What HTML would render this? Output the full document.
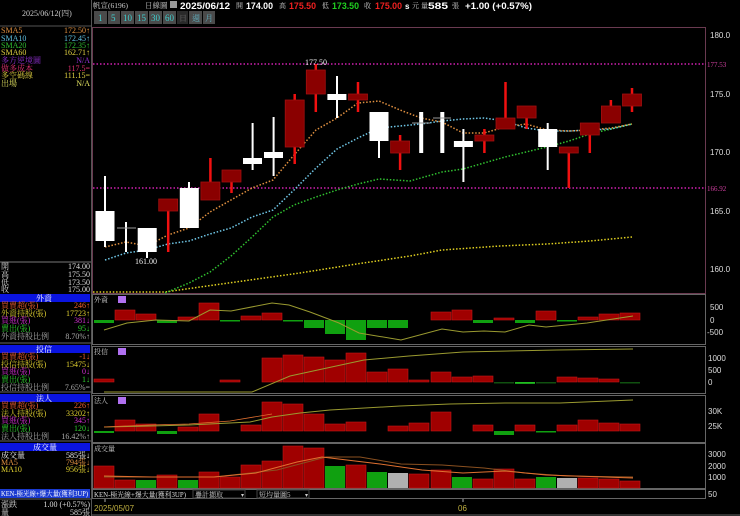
<!DOCTYPE html>
<html><head><meta charset="utf-8"><style>
html,body{margin:0;padding:0;background:#000;width:740px;height:516px;overflow:hidden}
svg{display:block}
text{font-family:"Liberation Serif","Noto Serif CJK TC","Noto Sans CJK TC",serif;font-size:8px}
.b{font-family:"Liberation Sans","Noto Sans CJK TC",sans-serif;font-weight:bold;font-size:9.5px}
.ax{font-family:"Liberation Sans",sans-serif;font-size:8px;fill:#ddd}
</style></head><body>
<svg width="740" height="516" viewBox="0 0 740 516" xmlns="http://www.w3.org/2000/svg">
<rect width="740" height="516" fill="#000"/>
<!-- header -->
<text x="93" y="8" fill="#ccc" style="font-size:7.5px">帆宣(6196)</text>
<text x="145" y="8" fill="#ccc" style="font-size:7.5px">日線圖</text>
<rect x="170" y="1" width="7" height="7" fill="#999"/>
<text class="b" x="180" y="9" fill="#fff" textLength="50" lengthAdjust="spacingAndGlyphs">2025/06/12</text>
<text x="236" y="8" fill="#ccc" style="font-size:7px">開</text><text class="b" x="246" y="9" fill="#fff" textLength="27" lengthAdjust="spacingAndGlyphs">174.00</text>
<text x="279" y="8" fill="#ccc" style="font-size:7px">高</text><text class="b" x="289" y="9" fill="#f02020" textLength="27" lengthAdjust="spacingAndGlyphs">175.50</text>
<text x="322" y="8" fill="#ccc" style="font-size:7px">低</text><text class="b" x="332" y="9" fill="#20d020" textLength="27" lengthAdjust="spacingAndGlyphs">173.50</text>
<text x="364" y="8" fill="#ccc" style="font-size:7px">收</text><text class="b" x="375" y="9" fill="#f02020" textLength="27" lengthAdjust="spacingAndGlyphs">175.00</text>
<text class="b" x="405" y="9" fill="#fff" style="font-size:8px">s</text><text x="412" y="8" fill="#ccc" style="font-size:7px">元</text>
<text x="421" y="8" fill="#ccc" style="font-size:7px">量</text><text class="b" x="428" y="9" fill="#fff" textLength="20" lengthAdjust="spacingAndGlyphs">585</text><text x="452" y="8" fill="#ccc" style="font-size:7px">張</text>
<text class="b" x="465" y="9" fill="#fff" textLength="67" lengthAdjust="spacingAndGlyphs">+1.00 (+0.57%)</text>
<!-- buttons -->
<g fill="#4a4a4a">
<rect x="94" y="11" width="13" height="13"/><rect x="108" y="11" width="12" height="13"/><rect x="121" y="11" width="13" height="13"/><rect x="135" y="11" width="13" height="13"/><rect x="149" y="11" width="13" height="13"/><rect x="163" y="11" width="13" height="13"/><rect x="177" y="11" width="11" height="13" fill="#2a2a2a"/><rect x="189" y="11" width="13" height="13"/><rect x="203" y="11" width="12" height="13"/></g>
<g fill="#40d0d0"><text x="98" y="21" style="font-size:9px">1</text><text x="111" y="21" style="font-size:9px">5</text><text x="123" y="21" style="font-size:9px">10</text><text x="137" y="21" style="font-size:9px">15</text><text x="151" y="21" style="font-size:9px">30</text><text x="165" y="21" style="font-size:9px">60</text></g>
<text x="179" y="21" fill="#666">日</text><text x="192" y="21" fill="#60b0c0">週</text><text x="205" y="21" fill="#60b0c0">月</text>

<!-- left panel -->
<text x="22" y="16" fill="#ccc">2025/06/12(四)</text>
<line x1="0" y1="26" x2="91" y2="26" stroke="#555"/>
<g style="font-size:7.5px">
<text x="1" y="33" fill="#e09040">SMA5</text><text x="90" y="33" fill="#e09040" text-anchor="end">172.50↑</text>
<text x="1" y="41" fill="#60c0e0">SMA10</text><text x="90" y="41" fill="#60c0e0" text-anchor="end">172.45↑</text>
<text x="1" y="48" fill="#30c030">SMA20</text><text x="90" y="48" fill="#30c030" text-anchor="end">172.35↑</text>
<text x="1" y="55" fill="#e0d040">SMA60</text><text x="90" y="55" fill="#e0d040" text-anchor="end">162.71↑</text>
<text x="1" y="63" fill="#9030d0">多方逆境圖</text><text x="90" y="63" fill="#9030d0" text-anchor="end">N/A</text>
<text x="1" y="71" fill="#e03070">做多成本</text><text x="90" y="71" fill="#e03070" text-anchor="end">117.5=</text>
<text x="1" y="78" fill="#e0d040">多空碼線</text><text x="90" y="78" fill="#e0d040" text-anchor="end">111.15=</text>
<text x="1" y="86" fill="#e0e060">出場</text><text x="90" y="86" fill="#e0e060" text-anchor="end">N/A</text>
</g>
<line x1="0" y1="262" x2="91" y2="262" stroke="#777"/>
<g fill="#ddd" style="font-size:8px">
<text x="1" y="269">開</text><text x="90" y="269" text-anchor="end">174.00</text>
<text x="1" y="277">高</text><text x="90" y="277" text-anchor="end">175.50</text>
<text x="1" y="285">低</text><text x="90" y="285" text-anchor="end">173.50</text>
<text x="1" y="292">收</text><text x="90" y="292" text-anchor="end">175.00</text>
</g>
<g style="font-size:7.5px">
<rect x="0" y="294" width="90" height="8" fill="#0a14e0"/><text x="36" y="301" fill="#fff">外資</text>
<text x="1" y="308" fill="#f06030">買賣超(張)</text><text x="90" y="308" fill="#f06030" text-anchor="end">246↑</text>
<text x="1" y="316" fill="#e0d030">外資持股(張)</text><text x="90" y="316" fill="#e0d030" text-anchor="end">17723↑</text>
<text x="1" y="323" fill="#d030d0">買進(張)</text><text x="90" y="323" fill="#d030d0" text-anchor="end">381↓</text>
<text x="1" y="331" fill="#30d030">賣出(張)</text><text x="90" y="331" fill="#30d030" text-anchor="end">95↓</text>
<text x="1" y="339" fill="#aaa">外資持股比例</text><text x="90" y="339" fill="#aaa" text-anchor="end">8.70%↑</text>
<line x1="0" y1="343" x2="91" y2="343" stroke="#666"/>
<rect x="0" y="345" width="90" height="8" fill="#0a14e0"/><text x="36" y="352" fill="#fff">投信</text>
<text x="1" y="359" fill="#f06030">買賣超(張)</text><text x="90" y="359" fill="#f06030" text-anchor="end">-1↓</text>
<text x="1" y="367" fill="#e0d030">投信持股(張)</text><text x="90" y="367" fill="#e0d030" text-anchor="end">15475↓</text>
<text x="1" y="374" fill="#d030d0">買進(張)</text><text x="90" y="374" fill="#d030d0" text-anchor="end">0↓</text>
<text x="1" y="382" fill="#30d030">賣出(張)</text><text x="90" y="382" fill="#30d030" text-anchor="end">1↓</text>
<text x="1" y="390" fill="#aaa">投信持股比例</text><text x="90" y="390" fill="#aaa" text-anchor="end">7.65%=</text>
<line x1="0" y1="392" x2="91" y2="392" stroke="#666"/>
<rect x="0" y="394" width="90" height="8" fill="#0a14e0"/><text x="36" y="401" fill="#fff">法人</text>
<text x="1" y="408" fill="#f06030">買賣超(張)</text><text x="90" y="408" fill="#f06030" text-anchor="end">226↑</text>
<text x="1" y="416" fill="#e0d030">法人持股(張)</text><text x="90" y="416" fill="#e0d030" text-anchor="end">33202↑</text>
<text x="1" y="423" fill="#d030d0">買進(張)</text><text x="90" y="423" fill="#d030d0" text-anchor="end">345↑</text>
<text x="1" y="431" fill="#30d030">賣出(張)</text><text x="90" y="431" fill="#30d030" text-anchor="end">120↓</text>
<text x="1" y="439" fill="#aaa">法人持股比例</text><text x="90" y="439" fill="#aaa" text-anchor="end">16.42%↑</text>
<line x1="0" y1="441" x2="91" y2="441" stroke="#666"/>
<rect x="0" y="443" width="90" height="8" fill="#0a14e0"/><text x="33" y="450" fill="#fff">成交量</text>
<text x="1" y="458" fill="#eee">成交量</text><text x="90" y="458" fill="#eee" text-anchor="end">585張↓</text>
<text x="1" y="465" fill="#e09040">MA5</text><text x="90" y="465" fill="#e09040" text-anchor="end">794張↓</text>
<text x="1" y="472" fill="#e0d030">MA10</text><text x="90" y="472" fill="#e0d030" text-anchor="end">956張↓</text>
<rect x="0" y="489" width="90" height="9" fill="#1a3ad0"/><text x="1" y="496" fill="#fff" style="font-size:7px" textLength="87" lengthAdjust="spacingAndGlyphs">KEN-極光線+爆大量(獲利3UP)</text>
<line x1="0" y1="499" x2="91" y2="499" stroke="#666"/>
<text x="1" y="507" fill="#ddd">漲跌</text><text x="90" y="507" fill="#ddd" text-anchor="end">1.00 (+0.57%)</text>
<text x="1" y="515" fill="#ddd">量</text><text x="90" y="515" fill="#ddd" text-anchor="end">585張</text>
</g>
<line x1="91.5" y1="0" x2="91.5" y2="516" stroke="#555"/>

<!-- main chart frame -->
<rect x="92.5" y="27.5" width="613" height="266" fill="none" stroke="#6a3a50"/>
<g class="ax"><text x="710" y="38" class="ax">180.0</text><text x="710" y="97" class="ax">175.0</text><text x="710" y="155" class="ax">170.0</text><text x="710" y="214" class="ax">165.0</text><text x="710" y="272" class="ax">160.0</text>
<text x="707" y="67" fill="#d040a0" style="font-size:7px">177.53</text><text x="707" y="191" fill="#d040a0" style="font-size:7px">166.92</text></g>
<g stroke="#d020b0" stroke-width="1.5" stroke-dasharray="1.5 2"><line x1="93" y1="64" x2="706" y2="64"/><line x1="93" y1="188" x2="706" y2="188"/></g>

<!-- MA lines -->
<g fill="none" stroke-width="1.5" stroke-dasharray="1.5 1.8">
<polyline stroke="#e0d020" points="93,292 165,292 200,287 250,280 300,273 350,265 410,256 442,250 500,246 547,244 590,241 632,237"/>
<polyline stroke="#30c030" points="165,293 189,283 210,272 231,256 252,237 273,217 294,205 316,197 337,190 358,184 379,179 410,181 442,172 463,169 484,163 505,157 526,152 547,147 569,141 590,134 611,129 632,124"/>
<polyline stroke="#70c8e8" points="105,260 126,253 147,250 168,244 189,241 210,234 231,228 252,217 273,210 294,190 316,168 337,149 358,138 379,128 400,126 421,124 442,121 463,119 484,118 505,121 526,128 547,131 569,131 590,130 611,129 632,124"/>
<polyline stroke="#e09040" points="105,247 126,242 147,246 168,235 189,228 210,212 231,200 252,188 273,180 294,155 316,130 337,118 358,103 379,101 400,110 421,118 442,122 463,133 484,133 505,127 526,124 547,130 569,131 590,130 611,128 632,124"/>
</g>

<!-- candles -->
<g stroke="#fff" stroke-width="2">
<line x1="105" y1="176" x2="105" y2="247"/><line x1="126" y1="222" x2="126" y2="252"/><line x1="147" y1="228" x2="147" y2="258"/>
<line x1="189" y1="182" x2="189" y2="228"/><line x1="252.6" y1="123" x2="252.6" y2="170"/><line x1="273.6" y1="117" x2="273.6" y2="176"/>
<line x1="337" y1="76" x2="337" y2="118"/><line x1="379" y1="112" x2="379" y2="158"/><line x1="463.4" y1="129" x2="463.4" y2="182"/><line x1="547.7" y1="123" x2="547.7" y2="170"/>
</g>
<g fill="#fff">
<rect x="95.5" y="211" width="19" height="30"/><rect x="137.7" y="228" width="19" height="24"/><rect x="179.8" y="188" width="19" height="40"/>
<rect x="243" y="158" width="19" height="6"/><rect x="264" y="152" width="19" height="6"/><rect x="327.4" y="94" width="19" height="6"/>
<rect x="369.5" y="112" width="19" height="29"/><rect x="419.2" y="112" width="4" height="41"/><rect x="440.3" y="112" width="4" height="41"/>
<rect x="453.9" y="141" width="19" height="6"/><rect x="538.2" y="129" width="19" height="18"/>
</g>
<g stroke="#999" stroke-width="1"><line x1="117" y1="228" x2="136" y2="228"/><line x1="412" y1="123" x2="430" y2="123"/><line x1="433" y1="118" x2="451" y2="118"/></g>
<g stroke="#f01010" stroke-width="2.5">
<line x1="168.2" y1="199" x2="168.2" y2="252"/><line x1="210.4" y1="158" x2="210.4" y2="200"/><line x1="231.5" y1="170" x2="231.5" y2="193"/>
<line x1="294.7" y1="94" x2="294.7" y2="164"/><line x1="315.8" y1="64" x2="315.8" y2="112"/><line x1="358" y1="82" x2="358" y2="112"/>
<line x1="400.1" y1="135" x2="400.1" y2="170"/><line x1="484.4" y1="129" x2="484.4" y2="153"/><line x1="505.5" y1="82" x2="505.5" y2="129"/>
<line x1="526.6" y1="106" x2="526.6" y2="129"/><line x1="568.8" y1="147" x2="568.8" y2="188"/><line x1="589.8" y1="123" x2="589.8" y2="153"/>
<line x1="610.9" y1="100" x2="610.9" y2="123"/><line x1="632" y1="88" x2="632" y2="112"/>
</g>
<g fill="#8a0000" stroke="#a01010" stroke-width="0.8">
<rect x="158.7" y="199" width="19" height="12"/><rect x="200.9" y="182" width="19" height="18"/><rect x="222" y="170" width="19" height="12"/>
<rect x="285.2" y="100" width="19" height="47"/><rect x="306.3" y="70" width="19" height="24"/><rect x="348.5" y="94" width="19" height="6"/>
<rect x="390.6" y="141" width="19" height="12"/><rect x="474.9" y="135" width="19" height="6"/><rect x="496" y="118" width="19" height="11"/>
<rect x="517.1" y="106" width="19" height="12"/><rect x="559.3" y="147" width="19" height="6"/><rect x="580.3" y="123" width="19" height="12"/>
<rect x="601.4" y="106" width="19" height="17"/><rect x="622.5" y="94" width="19" height="12"/>
</g>
<text x="305" y="65" fill="#eee" style="font-size:8px">177.50</text>
<text x="135" y="264" fill="#eee" style="font-size:8px">161.00</text>

<!-- sub panels frames -->
<g fill="none" stroke="#666">
<rect x="92.5" y="294.5" width="613" height="50"/><rect x="92.5" y="346.5" width="613" height="47"/><rect x="92.5" y="395.5" width="613" height="47"/><rect x="92.5" y="443.5" width="613" height="45"/><rect x="92.5" y="489.5" width="613" height="9"/>
</g>
<g fill="#ccc">
<text x="94" y="302" style="font-size:7px">外資</text><text x="94" y="354" style="font-size:7px">投信</text><text x="94" y="403" style="font-size:7px">法人</text><text x="94" y="451" style="font-size:7px">成交量</text>
</g>
<g fill="#b070f0"><rect x="118" y="296" width="8" height="7"/><rect x="118" y="348" width="8" height="7"/><rect x="118" y="397" width="8" height="7"/></g>
<g class="ax"><text x="710" y="310" class="ax">500</text><text x="710" y="323" class="ax">0</text><text x="707" y="335" class="ax">-500</text>
<text x="708" y="361" class="ax">1000</text><text x="708" y="373" class="ax">500</text><text x="708" y="385" class="ax">0</text>
<text x="708" y="414" class="ax">30K</text><text x="708" y="429" class="ax">25K</text>
<text x="708" y="457" class="ax">3000</text><text x="708" y="469" class="ax">2000</text><text x="708" y="480" class="ax">1000</text><text x="708" y="497" class="ax">50</text></g>

<!-- 外資 bars (zero 320) -->
<g fill="#a00000" stroke="#c01818" stroke-width="0.6">
<rect x="115" y="310" width="20" height="10"/><rect x="136" y="314" width="20" height="6"/><rect x="178" y="317" width="20" height="3"/><rect x="199" y="303" width="20" height="17"/>
<rect x="241" y="316" width="20" height="4"/><rect x="262" y="313" width="20" height="7"/><rect x="431" y="312" width="20" height="8"/><rect x="452" y="310" width="20" height="10"/>
<rect x="494" y="318" width="20" height="2"/><rect x="536" y="311" width="20" height="9"/><rect x="578" y="317" width="20" height="3"/><rect x="599" y="314" width="20" height="6"/><rect x="620" y="313" width="20" height="7"/>
</g>
<g fill="#10a010">
<rect x="94" y="320" width="20" height="3"/><rect x="157" y="320" width="20" height="3"/><rect x="220" y="320" width="20" height="1.5"/><rect x="283" y="320" width="20" height="1.5"/>
<rect x="304" y="320" width="20" height="8"/><rect x="325" y="320" width="20" height="14"/><rect x="346" y="320" width="20" height="20"/><rect x="367" y="320" width="20" height="8"/><rect x="388" y="320" width="20" height="8"/>
<rect x="473" y="320" width="20" height="3"/><rect x="515" y="320" width="20" height="3"/><rect x="557" y="320" width="20" height="1.5"/>
</g>
<polyline fill="none" stroke="#9a9a30" stroke-width="1" points="104,330 127,323 156,320 189,321 210,310 231,311 272,303 289,305 310,312 339,323 359,333 401,340 442,329 463,332 484,331 505,332 529,325 546,327 587,323 633,316"/>

<!-- 投信 bars (zero 382) -->
<g fill="#a00000" stroke="#c01818" stroke-width="0.6">
<rect x="94" y="379" width="20" height="3"/><rect x="220" y="380" width="20" height="2"/>
<rect x="262" y="358" width="20" height="24"/><rect x="283" y="355" width="20" height="27"/><rect x="304" y="357" width="20" height="25"/><rect x="325" y="360" width="20" height="22"/><rect x="346" y="353" width="20" height="29"/>
<rect x="367" y="372" width="20" height="10"/><rect x="388" y="369" width="20" height="13"/><rect x="409" y="380" width="20" height="2"/><rect x="431" y="372" width="20" height="10"/><rect x="452" y="377" width="20" height="5"/><rect x="473" y="376" width="20" height="6"/>
<rect x="557" y="377" width="20" height="5"/><rect x="578" y="378" width="20" height="4"/><rect x="599" y="379" width="20" height="3"/>
</g>
<g fill="#105010"><rect x="494" y="382" width="20" height="1.5"/><rect x="536" y="382" width="20" height="1.5"/><rect x="620" y="382" width="20" height="1.5"/></g>
<rect x="515" y="382" width="20" height="1.8" fill="#20c020"/>
<polyline fill="none" stroke="#9a9a30" stroke-width="1" points="104,392 252,392 290,376 364,360 409,356 463,352 557,350 633,349"/>

<!-- 法人 bars (zero 431) -->
<g fill="#a00000" stroke="#c01818" stroke-width="0.6">
<rect x="115" y="420" width="20" height="11"/><rect x="136" y="424" width="20" height="7"/><rect x="178" y="427" width="20" height="4"/><rect x="199" y="414" width="20" height="17"/>
<rect x="241" y="425" width="20" height="6"/><rect x="262" y="402" width="20" height="29"/><rect x="283" y="404" width="20" height="27"/><rect x="304" y="414" width="20" height="17"/><rect x="325" y="424" width="20" height="7"/><rect x="346" y="422" width="20" height="9"/>
<rect x="388" y="426" width="20" height="5"/><rect x="409" y="423" width="20" height="8"/><rect x="431" y="412" width="20" height="19"/>
<rect x="473" y="425" width="20" height="6"/><rect x="515" y="425" width="20" height="6"/><rect x="557" y="425" width="20" height="6"/><rect x="578" y="420" width="20" height="11"/><rect x="599" y="423" width="20" height="8"/><rect x="620" y="424" width="20" height="7"/>
</g>
<g fill="#10a010"><rect x="94" y="431" width="20" height="2"/><rect x="157" y="431" width="20" height="3"/><rect x="494" y="431" width="20" height="4"/><rect x="536" y="431" width="20" height="1.5"/></g>
<polyline fill="none" stroke="#9a9a30" stroke-width="1" points="104,427 150,426 189,425 250,422 272,417 300,413 330,410 400,406 450,404 505,403 560,403 633,400"/>
<polyline fill="none" stroke="#e07030" stroke-width="0.8" points="104,427 150,425 189,424 230,421 272,414"/>

<!-- 成交量 bars (base 488) -->
<g fill="#a00000" stroke="#c01818" stroke-width="0.6">
<rect x="94" y="466" width="20" height="22"/><rect x="115" y="480" width="20" height="8"/><rect x="157" y="475" width="20" height="13"/><rect x="199" y="472" width="20" height="16"/><rect x="220" y="477" width="20" height="11"/>
<rect x="241" y="465" width="20" height="23"/><rect x="262" y="461" width="20" height="27"/><rect x="283" y="446" width="20" height="42"/><rect x="304" y="448" width="20" height="40"/>
<rect x="346" y="465" width="20" height="23"/><rect x="409" y="474" width="20" height="14"/><rect x="431" y="470" width="20" height="18"/><rect x="473" y="479" width="20" height="9"/><rect x="494" y="469" width="20" height="19"/><rect x="515" y="479" width="20" height="9"/>
<rect x="578" y="478" width="20" height="10"/><rect x="599" y="479" width="20" height="9"/><rect x="620" y="481" width="20" height="7"/>
</g>
<g fill="#10a010"><rect x="136" y="480" width="20" height="8"/><rect x="178" y="480" width="20" height="8"/><rect x="325" y="466" width="20" height="22"/><rect x="367" y="472" width="20" height="16"/><rect x="452" y="477" width="20" height="11"/><rect x="536" y="477" width="20" height="11"/></g>
<g fill="#b0b0b0"><rect x="388" y="473" width="20" height="15"/><rect x="557" y="478" width="20" height="10"/></g>
<polyline fill="none" stroke="#8a5020" stroke-width="1" points="104,477 214,477 277,470 326,457 360,457 401,464 442,465 484,468 525,473 567,476 633,477"/>
<polyline fill="none" stroke="#e07030" stroke-width="1" points="104,476 152,477 214,477 256,473 297,462 322,457 380,464 422,470 463,473 505,471 546,475 633,478"/>

<!-- control row -->
<text x="94" y="497" fill="#ddd" style="font-size:7px" textLength="92" lengthAdjust="spacingAndGlyphs">KEN-極光線+爆大量(獲利3UP)</text>
<rect x="193" y="490" width="52" height="8" fill="#000" stroke="#444"/><text x="195" y="497" fill="#ccc" style="font-size:7px">疊計擷取</text><text x="241" y="497" fill="#ccc" style="font-size:6px">▾</text>
<rect x="257" y="490" width="52" height="8" fill="#000" stroke="#444"/><text x="259" y="497" fill="#ccc" style="font-size:7px">短均量圖5</text><text x="305" y="497" fill="#ccc" style="font-size:6px">▾</text>
<!-- date axis -->
<line x1="105" y1="499" x2="105" y2="502" stroke="#aaa"/><line x1="463" y1="499" x2="463" y2="502" stroke="#aaa"/>
<text x="94" y="511" fill="#c0b040" style="font-family:'Liberation Sans',sans-serif;font-size:8px">2025/05/07</text>
<text x="458" y="511" fill="#c0b040" style="font-family:'Liberation Sans',sans-serif;font-size:8px">06</text>
<rect x="92" y="514" width="648" height="2" fill="#333"/>
</svg>
</body></html>
